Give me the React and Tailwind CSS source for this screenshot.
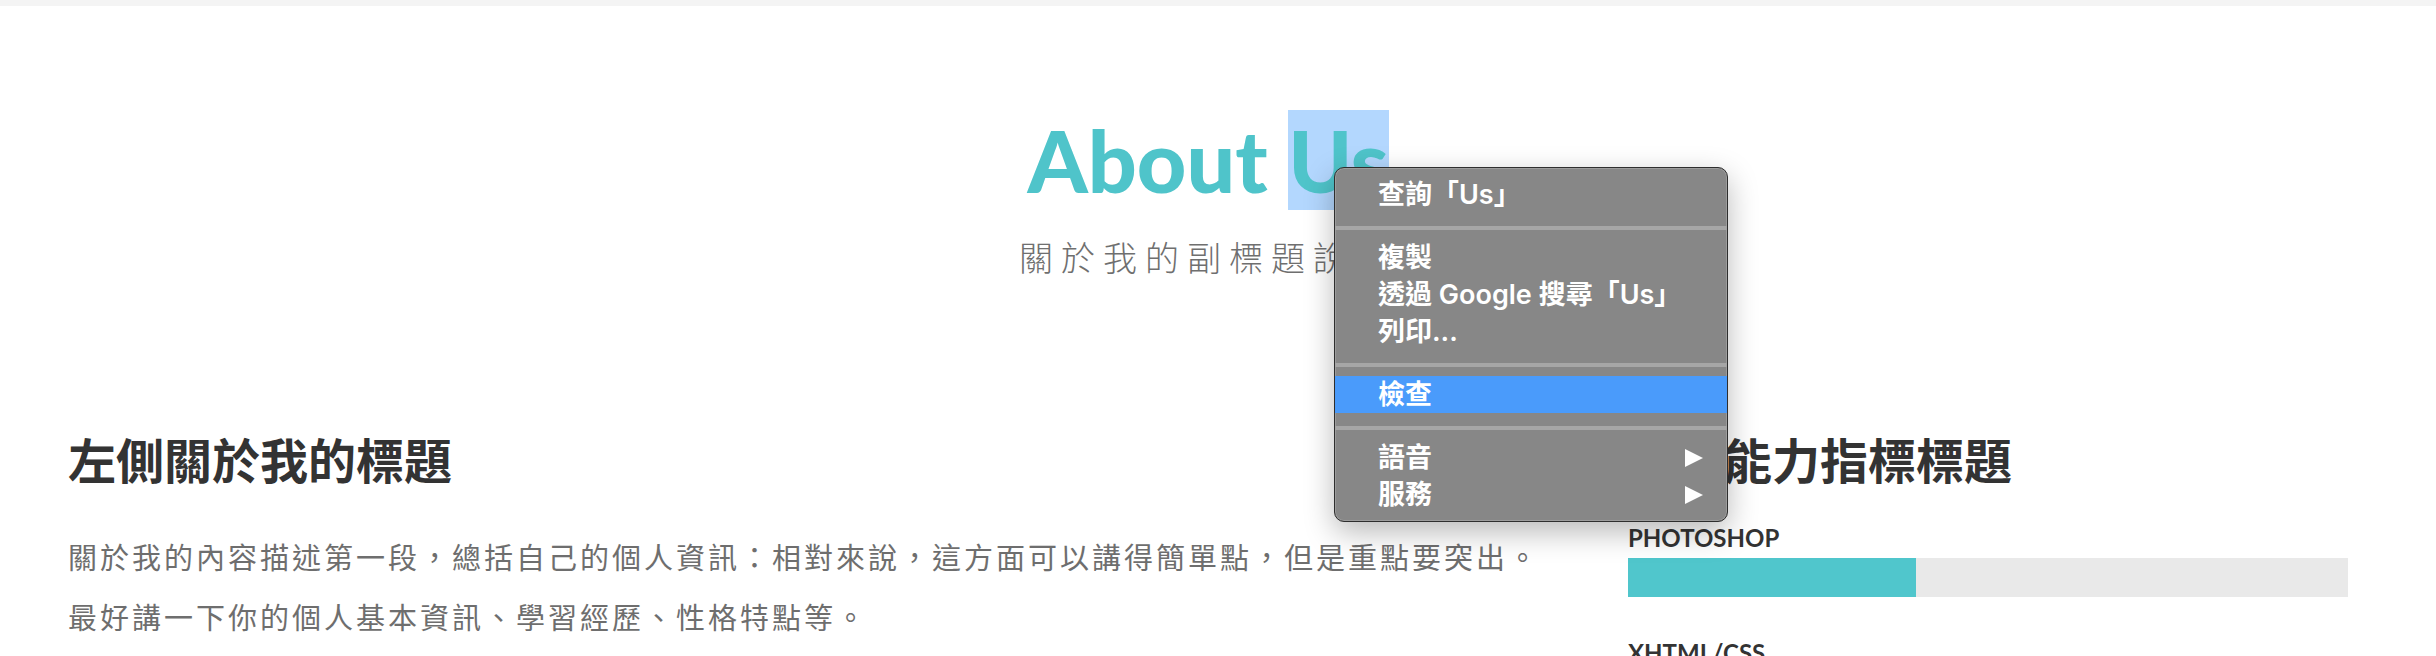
import React from 'react';

const cjk = "[font-family:'Noto_Sans_CJK_TC',sans-serif]";
const latin = "[font-family:Lato,'Noto_Sans_CJK_TC',sans-serif]";

const menuGroups = [
  [{ label: '查詢「Us」' }],
  [{ label: '複製' }, { label: '透過 Google 搜尋「Us」' }, { label: '列印...' }],
  [{ label: '檢查', active: true }],
  [{ label: '語音', sub: true }, { label: '服務', sub: true }],
];

const skills = [
  { name: 'PHOTOSHOP', level: 40 },
  { name: 'XHTML/CSS', level: 70 },
];

const SubArrow = () => (
  <svg width="18" height="18" viewBox="0 0 18 18" className="shrink-0">
    <polygon points="0,0 18,9 0,18" fill="#ffffff" />
  </svg>
);

const ContextMenu = () => (
  <div className="absolute left-[1334px] top-[167px] w-[394px] rounded-[10px] border border-[#2e2e2e] bg-[#878787] pt-[8px] pb-[8px] shadow-[0_10px_30px_rgba(0,0,0,0.28),inset_0_0_0_1px_rgba(255,255,255,0.18)] [font-family:Inter,'Noto_Sans_CJK_TC',sans-serif]">
    {menuGroups.map((group, gi) => (
      <div key={gi}>
        {gi > 0 && (
          <div className="pt-[13px] pb-[9px]">
            <div className="h-[4px] bg-[#a6a6a6]" />
          </div>
        )}
        {group.map((item) => (
          <div
            key={item.label}
            className={`flex h-[37px] items-center justify-between pl-[43px] pr-[24px] text-[27px] leading-[37px] font-semibold text-white ${item.active ? 'bg-[#4a9bfb]' : ''}`}
          >
            <span>{item.label}</span>
            {item.sub && <SubArrow />}
          </div>
        ))}
      </div>
    ))}
  </div>
);

export default function App() {
  return (
    <div className="relative h-[656px] w-full overflow-hidden bg-white">
      <div className="h-[6px] bg-[#f4f4f4]" />

      <div className="w-[2416px] px-[68px]">
        <div className="mt-[104px] text-center">
          <h1 className={`${latin} text-[86px] leading-[100px] font-black text-[#4fc4ca]`}>
            About <span className="inline-block bg-[#b3d7fe]">Us</span>
          </h1>
          <p className={`${cjk} mt-[27px] text-[34px] leading-[40px] font-light tracking-[8px] text-[#6f6f6f]`}>
            關於我的副標題說明
          </p>
        </div>

        <div className="mt-[151px] grid grid-cols-[1fr_720px] gap-[60px]">
          <div>
            <h2 className={`${cjk} text-[48px] leading-[60px] font-bold text-[#333333]`}>左側關於我的標題</h2>
            <div className={`${cjk} mt-[38px] text-[29px] leading-[60px] tracking-[3px] text-[#6e6e6e]`}>
              <p>關於我的內容描述第一段，總括自己的個人資訊：相對來說，這方面可以講得簡單點，但是重點要突出。</p>
              <p>最好講一下你的個人基本資訊、學習經歷、性格特點等。</p>
            </div>
          </div>

          <div>
            <h2 className={`${cjk} text-[48px] leading-[60px] font-bold text-[#333333]`}>右側能力指標標題</h2>
            <div className="mt-[35px] flex flex-col gap-[41px]">
              {skills.map((s) => (
                <div key={s.name}>
                  <div className={`${latin} text-[24px] leading-[30px] font-bold text-[#333333]`}>{s.name}</div>
                  <div className="mt-[5px] h-[39px] bg-[#e9e9e9]">
                    <div className="h-full bg-[#50c6cc]" style={{ width: `${s.level}%` }} />
                  </div>
                </div>
              ))}
            </div>
          </div>
        </div>
      </div>

      <ContextMenu />
    </div>
  );
}
